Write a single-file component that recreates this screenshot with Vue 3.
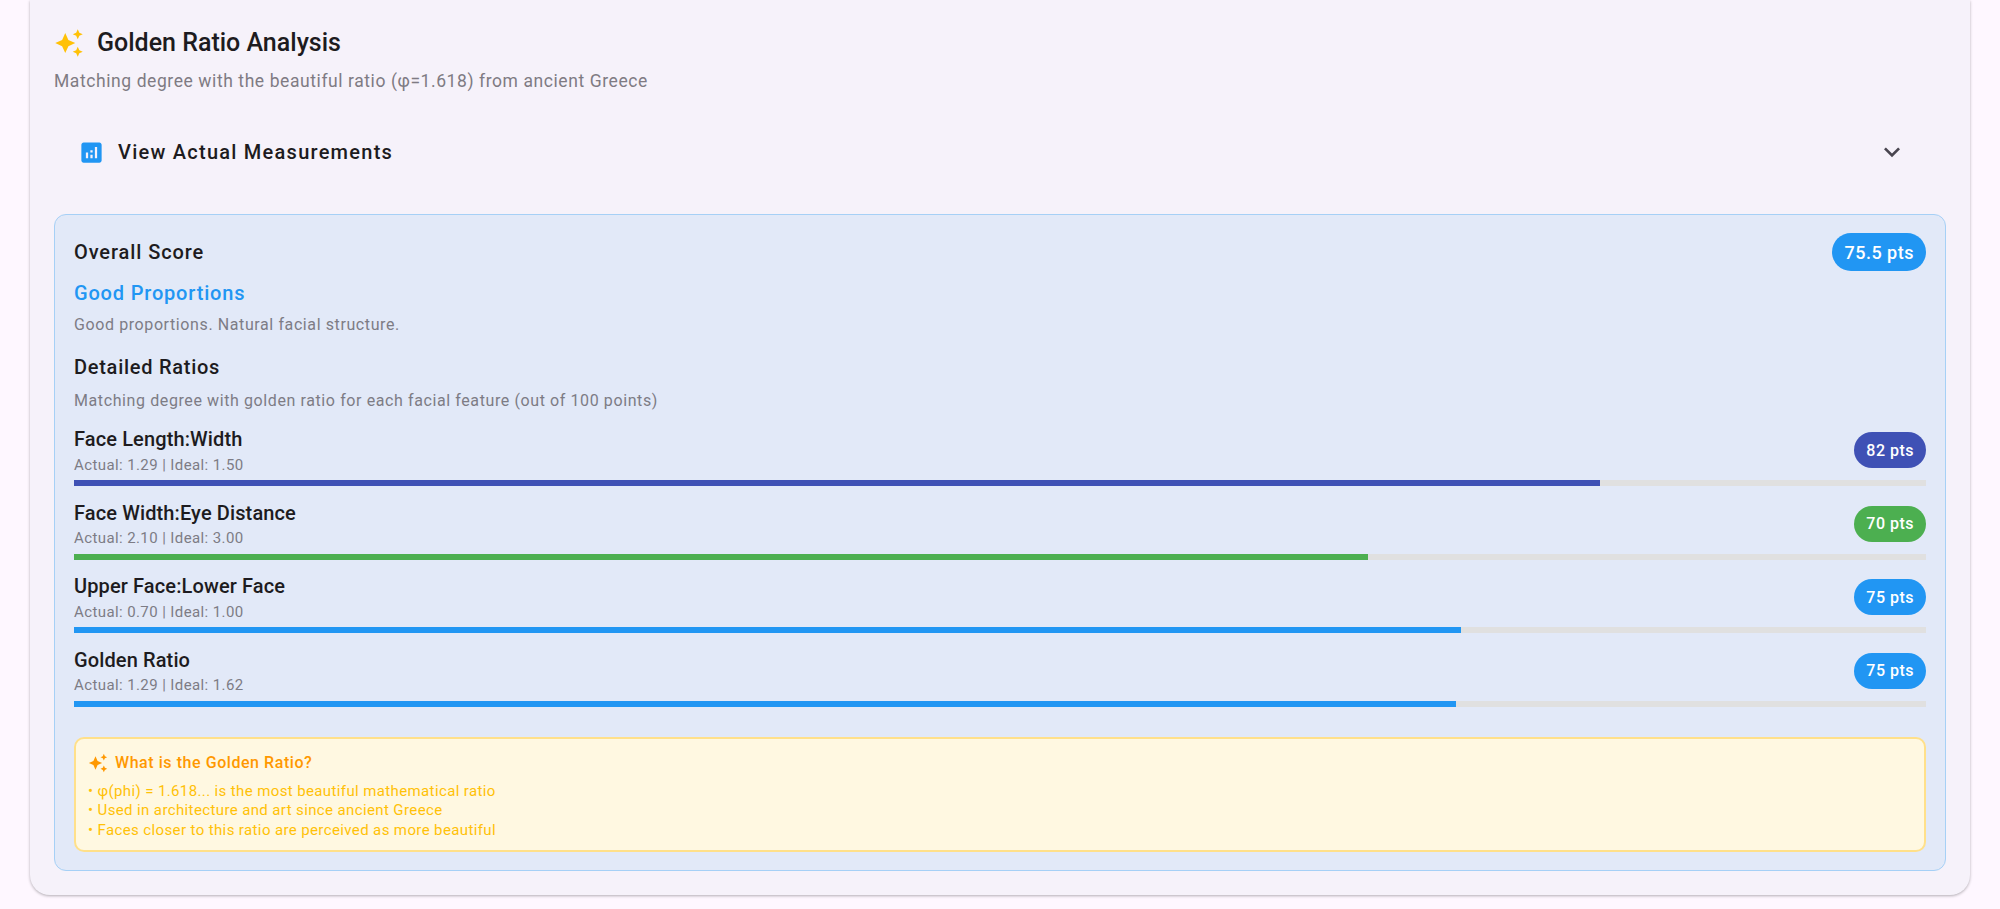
<script setup>
const rows = [
  { name: 'Face Length:Width', meta: 'Actual: 1.29 | Ideal: 1.50', pts: '82 pts', pct: 82.4, color: '#3f51b5' },
  { name: 'Face Width:Eye Distance', meta: 'Actual: 2.10 | Ideal: 3.00', pts: '70 pts', pct: 69.85, color: '#4caf50' },
  { name: 'Upper Face:Lower Face', meta: 'Actual: 0.70 | Ideal: 1.00', pts: '75 pts', pct: 74.9, color: '#2196f3' },
  { name: 'Golden Ratio', meta: 'Actual: 1.29 | Ideal: 1.62', pts: '75 pts', pct: 74.6, color: '#2196f3' }
]
const notes = [
  '• φ(phi) = 1.618... is the most beautiful mathematical ratio',
  '• Used in architecture and art since ancient Greece',
  '• Faces closer to this ratio are perceived as more beautiful'
]
const sparkle = 'M19 9l1.25-2.75L23 5l-2.75-1.25L19 1l-1.25 2.75L15 5l2.75 1.25L19 9zm-7.5.5L9 4 6.5 9.5 1 12l5.5 2.5L9 20l2.5-5.5L17 12l-5.5-2.5zM19 15l-1.25 2.75L15 19l2.75 1.25L19 23l1.25-2.75L23 19l-2.75-1.25L19 15z'
</script>

<template>
  <div class="page">
    <section class="card">
      <header class="title-row">
        <svg class="title-icon" viewBox="0 0 24 24"><path :d="sparkle" fill="#ffc107" /></svg>
        <h2 class="title">Golden Ratio Analysis</h2>
      </header>
      <p class="subtitle">Matching degree with the beautiful ratio (φ=1.618) from ancient Greece</p>

      <div class="expander">
        <svg class="chart-icon" viewBox="0 0 24 24"><path d="M19 3H5c-1.1 0-2 .9-2 2v14c0 1.1.9 2 2 2h14c1.100 0 2-.9 2-2V5c0-1.100-.9-2-2-2zM9 17H7v-5h2v5zm4 0h-2v-3h2v3zm0-5h-2v-2h2v2zm4 5h-2V7h2v10z" fill="#2196f3" /></svg>
        <span class="expander-label">View Actual Measurements</span>
        <svg class="chevron" viewBox="0 0 24 24"><path d="M16.59 8.59 12 13.17 7.41 8.59 6 10l6 6 6-6z" fill="#49454f" /></svg>
      </div>

      <div class="panel">
        <div class="score-row">
          <span class="score-label">Overall Score</span>
          <span class="pill pill-lg">75.5 pts</span>
        </div>
        <div class="grade">Good Proportions</div>
        <div class="grade-note">Good proportions. Natural facial structure.</div>
        <div class="detail-title">Detailed Ratios</div>
        <div class="detail-note">Matching degree with golden ratio for each facial feature (out of 100 points)</div>

        <div class="ratio-list">
          <div v-for="row in rows" :key="row.name" class="ratio">
            <div class="ratio-head">
              <div>
                <div class="ratio-name">{{ row.name }}</div>
                <div class="ratio-meta">{{ row.meta }}</div>
              </div>
              <span class="pill" :style="{ background: row.color }">{{ row.pts }}</span>
            </div>
            <div class="track"><div class="fill" :style="{ width: row.pct + '%', background: row.color }"></div></div>
          </div>
        </div>

        <div class="info">
          <div class="info-head">
            <svg class="info-icon" viewBox="0 0 24 24"><path :d="sparkle" fill="#ff9800" /></svg>
            <span>What is the Golden Ratio?</span>
          </div>
          <div class="info-body">
            <div v-for="n in notes" :key="n">{{ n }}</div>
          </div>
        </div>
      </div>
    </section>
  </div>
</template>

<style>
html, body { margin: 0; background: #fef7ff; overflow: hidden; }
</style>

<style scoped>
.page {
  height: 909px;
  box-sizing: border-box;
  padding: 0 30px;
  background: #fef7ff;
  font-family: Roboto, sans-serif;
  color: #1d1b20;
  overflow: hidden;
}
.card {
  box-sizing: border-box;
  height: 895px;
  padding: 28px 24px 24px;
  background: #f6f2fa;
  border-radius: 0 0 20px 20px;
  box-shadow: 0 1px 3px rgba(0, 0, 0, 0.3);
}
.title-row { display: flex; align-items: center; gap: 13px; height: 30px; }
.title-icon { width: 30px; height: 30px; flex: none; }
.title { margin: 0; font-size: 25px; font-weight: 500; line-height: 30px; }
.subtitle { margin: 10.500px 0 0; font-size: 17.5px; line-height: 24px; letter-spacing: 0.58px; color: #7f7b83; }
.expander { display: flex; align-items: center; height: 80px; margin-top: 19.500px; padding: 0 24px; }
.chart-icon { width: 27px; height: 27px; flex: none; }
.expander-label { margin-left: 13px; font-size: 20px; font-weight: 500; letter-spacing: 1.25px; }
.chevron { width: 32px; height: 32px; margin-left: auto; margin-right: 14px; }
.panel {
  box-sizing: border-box;
  height: 657px;
  margin-top: 22px;
  padding: 18px 19px;
  background: #e2e9f8;
  border: 1px solid #a6d0f6;
  border-radius: 12px;
}
.score-row { display: flex; justify-content: space-between; align-items: center; height: 38px; }
.score-label { font-size: 20px; font-weight: 500; letter-spacing: 0.9px; }
.pill {
  display: flex; align-items: center; justify-content: center;
  box-sizing: border-box;
  height: 36px; padding: 0 12px;
  border-radius: 18px;
  color: #fff; font-size: 16px; font-weight: 500; letter-spacing: 0.5px;
}
.pill-lg { height: 38px; padding: 0 12px; border-radius: 19px; background: #2196f3; font-size: 18px; }
.grade { margin-top: 8px; font-size: 20px; font-weight: 500; line-height: 28px; letter-spacing: 0.82px; color: #2196f3; }
.grade-note { margin-top: 6.600px; font-size: 16px; line-height: 22px; letter-spacing: 0.6px; color: #7d7c85; }
.detail-title { margin-top: 17.400px; font-size: 20px; font-weight: 500; line-height: 28px; letter-spacing: 0.73px; }
.detail-note { margin-top: 9px; font-size: 16px; line-height: 22px; letter-spacing: 0.6px; color: #7d7c85; }
.ratio-list { margin-top: 13.300px; }
.ratio { height: 73.5px; }
.ratio-head { display: flex; justify-content: space-between; align-items: center; height: 49.500px; }
.ratio-name { font-size: 20px; font-weight: 500; line-height: 28px; letter-spacing: 0.12px; }
.ratio-meta { font-size: 15px; line-height: 20px; letter-spacing: 0.4px; color: #7d7c85; margin-top: 1.500px; }
.track { height: 6px; background: #e0e0e0; margin-top: 5.400px; }
.fill { height: 100%; }
.info {
  box-sizing: border-box;
  height: 114.500px;
  margin-top: 18px;
  padding: 12px;
  background: #fff8e1;
  border: 2px solid #ffe08a;
  border-radius: 10px;
}
.info-head { display: flex; align-items: center; gap: 7px; color: #ff9800; font-size: 16px; font-weight: 500; letter-spacing: 0.56px; line-height: 24px; }
.info-icon { width: 20px; height: 20px; flex: none; }
.info-body { margin-top: 6.500px; font-size: 15px; line-height: 19.5px; letter-spacing: 0.38px; color: #ffc107; }
</style>
